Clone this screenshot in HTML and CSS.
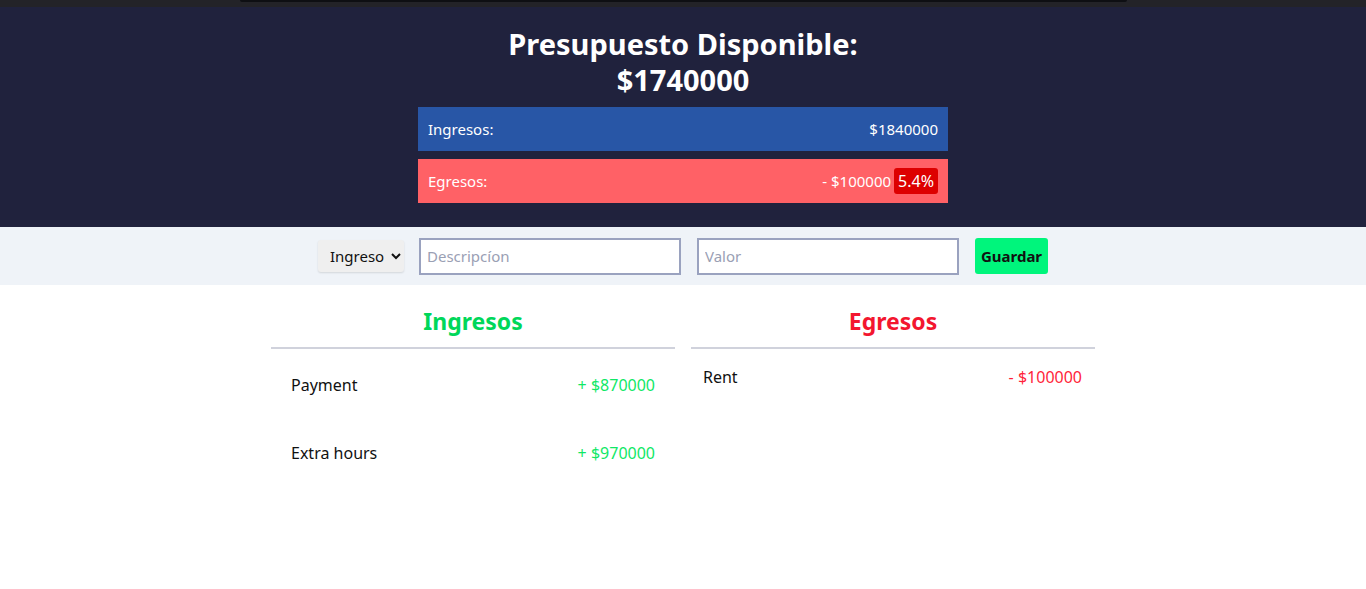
FILE: index.html
```html
<!DOCTYPE html>
<html lang="es">
<head>
<meta charset="utf-8">
<title>Presupuesto</title>
<link rel="stylesheet" href="styles.css">
</head>
<body>
<div class="topbar"><div class="topbar-inner"></div></div>
<header class="header">
  <h1 class="title">Presupuesto Disponible:<br>$1740000</h1>
  <div class="bars">
    <div class="bar bar-in"><span>Ingresos:</span><span>$1840000</span></div>
    <div class="bar bar-out"><span>Egresos:</span><span class="bar-right">- $100000 <span class="badge">5.4%</span></span></div>
  </div>
</header>
<form class="form">
  <select class="select"><option>Ingreso</option><option>Egreso</option></select>
  <input class="input" type="text" placeholder="Descripcíon">
  <input class="input" type="text" placeholder="Valor">
  <button class="btn" type="button">Guardar</button>
</form>
<main class="lists">
  <section class="col">
    <h2 class="col-title green">Ingresos</h2>
    <div class="row row-in"><span>Payment</span><span class="green-amt">+ $870000</span></div>
    <div class="row row-in"><span>Extra hours</span><span class="green-amt">+ $970000</span></div>
  </section>
  <section class="col">
    <h2 class="col-title red">Egresos</h2>
    <div class="row row-out"><span>Rent</span><span class="red-amt">- $100000</span></div>
  </section>
</main>
</body>
</html>
```
FILE: styles.css
```css
* { box-sizing: border-box; }
body {
  margin: 0;
  font-family: "Noto Sans", "Open Sans", sans-serif;
  background: #fff;
  color: #111;
}
.topbar {
  height: 7px;
  background: #232328;
  display: flex;
  justify-content: center;
}
.topbar-inner {
  width: 887px;
  height: 2px;
  background: #0e0f13;
  border-radius: 0 0 3px 3px;
}
.header {
  background: #20223d;
  padding: 19px 0 24px;
}
.title {
  margin: 0 0 9px;
  text-align: center;
  color: #fff;
  font-size: 29px;
  line-height: 36px;
  font-weight: 700;
}
.bars {
  width: 530px;
  margin: 0 auto;
  display: flex;
  flex-direction: column;
  gap: 8px;
}
.bar {
  height: 44px;
  padding: 0 10px;
  display: flex;
  align-items: center;
  justify-content: space-between;
  color: #fff;
  font-size: 15px;
}
.bar-in { background: #2856a6; }
.bar-out { background: #ff6166; }
.bar-right { display: flex; align-items: center; gap: 3px; }
.badge {
  background: #dd0000;
  border-radius: 3px;
  padding: 3px 4px;
  line-height: 20px;
  font-size: 16px;
}
.form {
  background: #eff3f8;
  height: 58px;
  display: flex;
  align-items: center;
  justify-content: center;
  gap: 16px;
}
.select {
  width: 86px;
  height: 32px;
  background: #efefef;
  border: none;
  border-radius: 3px;
  box-shadow: 0 1px 2px rgba(0,0,0,0.12);
  font-family: inherit;
  font-size: 15px;
  color: #111;
  padding: 0 4px 0 8px;
  margin-right: -1px;
}
.input {
  width: 262px;
  height: 37px;
  border: 2px solid #9aa2bf;
  background: #fff;
  font-family: inherit;
  font-size: 15px;
  padding: 0 6px;
}
.input::placeholder { color: #9aa0b4; }
.btn {
  width: 73px;
  height: 36px;
  background: #00f57c;
  border: none;
  border-radius: 3px;
  font-family: inherit;
  font-weight: 700;
  font-size: 15px;
  color: #111;
  padding: 0;
}
.lists {
  display: flex;
  justify-content: center;
  gap: 16px;
  padding-top: 20px;
}
.col { width: 404px; }
.col-title {
  margin: 0 0 2px;
  text-align: center;
  font-size: 23px;
  line-height: 32px;
  padding-bottom: 10px;
  border-bottom: 2px solid #d0d2dc;
  font-weight: 700;
}
.green { color: #00d75a; }
.red { color: #f3162f; }
.row {
  display: flex;
  align-items: center;
  justify-content: space-between;
  font-size: 16px;
}
.row-in { height: 68px; padding: 0 20px; }
.row-out { height: 52px; padding: 0 13px 0 12px; }
.green-amt { color: #10e866; }
.red-amt { color: #ff1f3a; }
```
